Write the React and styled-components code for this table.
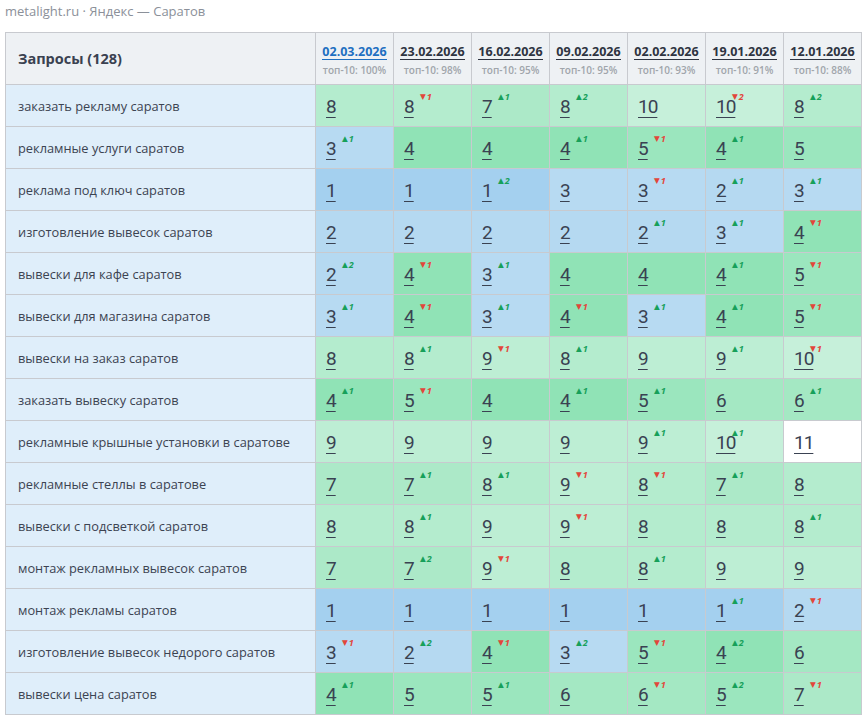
import styled, { createGlobalStyle } from 'styled-components';

const GlobalStyle = createGlobalStyle`
  body {
    margin: 0;
    background: #ffffff;
    font-family: 'Open Sans', 'Noto Sans', sans-serif;
    color: #3b4252;
  }
`;

const dates = [
  { date: '02.03.2026', top: 100, active: true },
  { date: '23.02.2026', top: 98 },
  { date: '16.02.2026', top: 95 },
  { date: '09.02.2026', top: 95 },
  { date: '02.02.2026', top: 93 },
  { date: '19.01.2026', top: 91 },
  { date: '12.01.2026', top: 88 },
];

// [позиция, изменение]
const rows = [
  ['заказать рекламу саратов', [[8], [8, -1], [7, 1], [8, 2], [10], [10, -2], [8, 2]]],
  ['рекламные услуги саратов', [[3, 1], [4], [4], [4, 1], [5, -1], [4, 1], [5]]],
  ['реклама под ключ саратов', [[1], [1], [1, 2], [3], [3, -1], [2, 1], [3, 1]]],
  ['изготовление вывесок саратов', [[2], [2], [2], [2], [2, 1], [3, 1], [4, -1]]],
  ['вывески для кафе саратов', [[2, 2], [4, -1], [3, 1], [4], [4], [4, 1], [5, -1]]],
  ['вывески для магазина саратов', [[3, 1], [4, -1], [3, 1], [4, -1], [3, 1], [4, 1], [5, -1]]],
  ['вывески на заказ саратов', [[8], [8, 1], [9, -1], [8, 1], [9], [9, 1], [10, -1]]],
  ['заказать вывеску саратов', [[4, 1], [5, -1], [4], [4, 1], [5, 1], [6], [6, 1]]],
  ['рекламные крышные установки в саратове', [[9], [9], [9], [9], [9, 1], [10, 1], [11]]],
  ['рекламные стеллы в саратове', [[7], [7, 1], [8, 1], [9, -1], [8, -1], [7, 1], [8]]],
  ['вывески с подсветкой саратов', [[8], [8, 1], [9], [9, -1], [8], [8], [8, 1]]],
  ['монтаж рекламных вывесок саратов', [[7], [7, 2], [9, -1], [8], [8, 1], [9], [9]]],
  ['монтаж рекламы саратов', [[1], [1], [1], [1], [1], [1, 1], [2, -1]]],
  ['изготовление вывесок недорого саратов', [[3, -1], [2, 2], [4, -1], [3, 2], [5, -1], [4, 2], [6]]],
  ['вывески цена саратов', [[4, 1], [5], [5, 1], [6], [6, -1], [5, 2], [7, -1]]],
];

const shades = {
  1: '#a4d0ef',
  2: '#b5d9f1',
  3: '#b7daf2',
  4: '#90e3b6',
  5: '#9be6be',
  6: '#a4e8c3',
  7: '#ace9c8',
  8: '#b4ecce',
  9: '#bdeed4',
  10: '#c6f0da',
};

const shadeFor = (pos) => shades[pos] || '#ffffff';

const Page = styled.div`
  padding: 0 4px 0 5px;
`;

const Caption = styled.div`
  height: 32px;
  padding-top: 2px;
  box-sizing: border-box;
  font-size: 13px;
  line-height: 18px;
  color: #8b9099;
`;

const Grid = styled.div`
  display: grid;
  grid-template-columns: 309px repeat(7, 77px);
  grid-auto-rows: 41px;
  grid-template-rows: 51px;
  gap: 1px;
  padding: 1px;
  width: max-content;
  background: #c8cacf;
`;

const HeadTitle = styled.div`
  display: flex;
  align-items: center;
  padding-left: 12px;
  background: #eef1f4;
  font-size: 14.5px;
  font-weight: 700;
  color: #3a4150;
`;

const HeadDate = styled.div`
  display: flex;
  flex-direction: column;
  align-items: center;
  justify-content: center;
  gap: 4px;
  padding-top: 2px;
  background: #eef1f4;
`;

const DateLink = styled.a`
  font-size: 12.5px;
  font-weight: 700;
  line-height: 15px;
  color: ${(p) => (p.$active ? '#1e6fc1' : '#2e3441')};
  text-decoration: none;
  border-bottom: 1px solid ${(p) => (p.$active ? '#1e6fc1' : '#2e3441')};
  cursor: pointer;
`;

const TopShare = styled.span`
  font-size: 10px;
  font-weight: 600;
  line-height: 12px;
  color: #a0a5ab;
`;

const QueryCell = styled.div`
  display: flex;
  align-items: center;
  padding-left: 12px;
  background: #dfeefa;
  font-size: 12.8px;
  color: #3c4351;
  white-space: nowrap;
`;

const PosCell = styled.div`
  position: relative;
  display: flex;
  align-items: center;
  padding-left: 10px;
  background: ${(p) => p.$bg};
`;

const Position = styled.a`
  font-family: Roboto, 'Open Sans', sans-serif;
  font-size: 19px;
  line-height: 22px;
  letter-spacing: -1px;
  color: #3a4252;
  text-decoration: underline;
  text-decoration-thickness: 1px;
  text-underline-offset: 4px;
  margin-top: 2px;
  cursor: pointer;
`;

const Delta = styled.span`
  position: absolute;
  top: 7px;
  left: 26px;
  display: flex;
  align-items: center;
  gap: 1px;
  font-size: 9px;
  font-weight: 700;
  font-style: italic;
  line-height: 10px;
  color: ${(p) => (p.$up ? '#16a05a' : '#e2463a')};
`;

const Arrow = styled.span`
  font-family: 'DejaVu Sans', sans-serif;
  font-style: normal;
  font-size: 7.5px;
`;

const App = () => (
  <Page>
    <GlobalStyle />
    <Caption>metalight.ru · Яндекс — Саратов</Caption>
    <Grid>
      <HeadTitle>Запросы (128)</HeadTitle>
      {dates.map((d) => (
        <HeadDate key={d.date}>
          <DateLink $active={d.active}>{d.date}</DateLink>
          <TopShare>топ-10: {d.top}%</TopShare>
        </HeadDate>
      ))}
      {rows.map(([query, cells]) => [
        <QueryCell key={query}>{query}</QueryCell>,
        ...cells.map(([pos, delta], i) => (
          <PosCell key={query + i} $bg={shadeFor(pos)}>
            <Position>{pos}</Position>
            {delta ? (
              <Delta $up={delta > 0}>
                <Arrow>{delta > 0 ? '▲' : '▼'}</Arrow>
                {Math.abs(delta)}
              </Delta>
            ) : null}
          </PosCell>
        )),
      ])}
    </Grid>
  </Page>
);

export default App;
